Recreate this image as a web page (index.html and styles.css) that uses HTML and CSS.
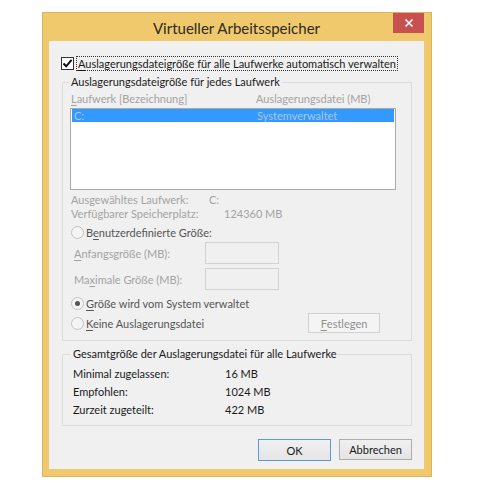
FILE: index.html
```html
<!DOCTYPE html>
<html>
<head>
  <meta charset="utf-8" />
  <title>Virtueller Arbeitsspeicher</title>
  <link rel="stylesheet" href="styles.css">
</head>
<body>
  <div class="window">
    <!-- Titelleiste -->
    <div class="titlebar">
      <span class="title">Virtueller Arbeitsspeicher</span>
      <span class="close_btn">
        <svg width="10" height="10" viewBox="0 0 10 10"><path d="M1.5 1.5 L8.5 8.5 M8.5 1.5 L1.5 8.5" stroke="#fff" stroke-width="1.6"/></svg>
      </span>
    </div>

    <div class="client">
      <!-- automatisch verwalten -->
      <label class="check_row">
        <span class="checkbox">
          <svg width="11" height="11" viewBox="0 0 11 11"><path d="M1.5 5.5 L4.2 8.3 L9.6 1.8" fill="none" stroke="#111" stroke-width="2"/></svg>
        </span>
        <span class="focus"><u>A</u>uslagerungsdateigröße für alle Laufwerke automatisch verwalten</span>
      </label>

      <!-- Gruppe 1 -->
      <fieldset class="group group_drives">
        <legend>Auslagerungsdateigröße für jedes Laufwerk</legend>
        <div class="cols dim">
          <span class="col_drive"><u>L</u>aufwerk [Bezeichnung]</span>
          <span>Auslagerungsdatei (MB)</span>
        </div>
        <div class="listbox">
          <div class="list_row sel">
            <span class="col_drive">C:</span>
            <span>Systemverwaltet</span>
          </div>
        </div>
        <div class="info dim">
          <div class="info_row"><span class="info_a">Ausgewähltes Laufwerk:</span><span>C:</span></div>
          <div class="info_row"><span class="info_b">Verfügbarer Speicherplatz:</span><span>124360 MB</span></div>
        </div>

        <div class="radio_row first">
          <span class="radio"></span>
          <span class="radio_label">B<u>e</u>nutzerdefinierte Größe:</span>
        </div>
        <div class="size_row">
          <span class="size_label dim"><u>A</u>nfangsgröße (MB):</span>
          <span class="textbox"></span>
        </div>
        <div class="size_row">
          <span class="size_label dim">Ma<u>x</u>imale Größe (MB):</span>
          <span class="textbox"></span>
        </div>
        <div class="radio_row second">
          <span class="radio on"></span>
          <span class="radio_label"><u>G</u>röße wird vom System verwaltet</span>
        </div>
        <div class="radio_row third">
          <span class="radio"></span>
          <span class="radio_label"><u>K</u>eine Auslagerungsdatei</span>
          <span class="btn btn_disabled"><u>F</u>estlegen</span>
        </div>
      </fieldset>

      <!-- Gruppe 2 -->
      <fieldset class="group group_total">
        <legend>Gesamtgröße der Auslagerungsdatei für alle Laufwerke</legend>
        <div class="total_row"><span class="total_label">Minimal zugelassen:</span><span>16 MB</span></div>
        <div class="total_row"><span class="total_label">Empfohlen:</span><span>1024 MB</span></div>
        <div class="total_row"><span class="total_label">Zurzeit zugeteilt:</span><span>422 MB</span></div>
      </fieldset>

      <div class="buttons">
        <span class="btn btn_default">OK</span>
        <span class="btn">Abbrechen</span>
      </div>
    </div>
  </div>
</body>
</html>
```

FILE: styles.css
```css
* {
  margin: 0;
  padding: 0;
  box-sizing: border-box;
}
body {
  background: #fff;
  font-family: Lato, "Noto Sans", sans-serif;
  font-size: 11px;
  color: #1a1a1a;
  white-space: nowrap;
}
u {
  text-decoration-thickness: 1px;
  text-underline-offset: 2px;
}
/* Fensterrahmen */
.window {
  margin: 12px 0 0 42px;
  width: 390px;
  height: 465px;
  background: #f0c96c;
  border: 1px solid #dcb460;
  padding: 0 7px 7px 6px;
  display: flex;
  flex-direction: column;
}
.titlebar {
  height: 28px;
  display: grid;
  grid-template-columns: 1fr auto 1fr;
}
.title {
  grid-column: 2;
  font-size: 15px;
  line-height: 30px;
  color: #2e2a24;
}
.close_btn {
  grid-column: 3;
  justify-self: end;
  width: 31px;
  height: 20px;
  background: #c75050;
  display: flex;
  align-items: center;
  justify-content: center;
}
.client {
  flex: 1;
  background: #f0f0f0;
  padding: 0 12px 0 13px;
  display: flex;
  flex-direction: column;
}
/* Checkbox */
.check_row {
  display: flex;
  align-items: center;
  height: 15px;
  margin: 15px 0 0 -1px;
}
.checkbox {
  width: 13px;
  height: 13px;
  border: 1px solid #333;
  background: #fff;
  display: flex;
  align-items: center;
  justify-content: center;
}
.focus {
  margin-left: 2px;
  border: 1px dotted #333;
  padding: 0 1px;
  line-height: 13px;
}
/* Gruppenrahmen */
.group {
  border: 1px solid #dcdcdc;
  padding: 3px 8px 7px 8px;
}
.group legend {
  padding: 0 2px;
  margin-left: -2px;
  line-height: 14px;
}
.group_drives {
  margin-top: 4px;
}
.dim {
  color: #a3a3a3;
}
.cols,
.list_row {
  display: flex;
  line-height: 14px;
}
.col_drive {
  width: 185px;
}
.listbox {
  margin: 2px 0 0 -1px;
  width: 326px;
  height: 82px;
  border: 1px solid #a9a9a9;
  background: #fff;
  padding: 0 1px;
}
.list_row.sel {
  background: #3399ff;
  color: #a9c6e8;
  height: 13px;
  line-height: 13px;
  padding-left: 2px;
  margin-top: 0;
}
.list_row.sel .col_drive {
  width: 183px;
}
.info {
  margin-top: 3px;
  line-height: 14px;
}
.info_row {
  display: flex;
}
.info_a {
  width: 138px;
}
.info_b {
  width: 153px;
}
/* Optionsfelder */
.radio_row {
  display: flex;
  align-items: center;
  height: 14px;
}
.radio_row.first {
  margin-top: 4px;
}
.radio_row.second {
  margin-top: 6px;
}
.radio_row.third {
  margin-top: 3px;
  height: 20px;
}
.radio {
  width: 13px;
  height: 13px;
  border-radius: 50%;
  border: 1px solid #c2c2c2;
  background: #f4f4f4;
  display: flex;
  align-items: center;
  justify-content: center;
}
.radio.on::after {
  content: "";
  width: 5px;
  height: 5px;
  border-radius: 50%;
  background: #555;
}
.radio_label {
  margin-left: 2px;
  color: #555;
}
.size_row {
  display: flex;
  align-items: center;
  padding-left: 3px;
  margin-top: 3px;
}
.size_row + .size_row {
  margin-top: 4px;
}
.size_label {
  width: 131px;
}
.textbox {
  width: 74px;
  height: 22px;
  border: 1px solid #d2d2d2;
  background: #f0f0f0;
}
/* Schaltflaechen */
.btn {
  width: 73px;
  height: 21px;
  border: 1px solid #adadad;
  background: linear-gradient(#f0f0f0, #e5e5e5);
  display: flex;
  align-items: center;
  justify-content: center;
  color: #1a1a1a;
}
.btn_disabled {
  margin: 0 23px 0 auto;
  width: 72px;
  height: 20px;
  border-color: #d0d0d0;
  background: #f4f4f4;
  color: #8f8f8f;
}
.btn_default {
  border-color: #5a9bd5;
  height: 22px;
}
.group_total {
  margin-top: 6px;
  padding: 4px 8px 6px 10px;
}
.total_row {
  display: flex;
  line-height: 18px;
}
.total_label {
  width: 152px;
}
.buttons {
  display: flex;
  justify-content: flex-end;
  align-items: flex-start;
  gap: 8px;
  margin-top: 13px;
}
```
